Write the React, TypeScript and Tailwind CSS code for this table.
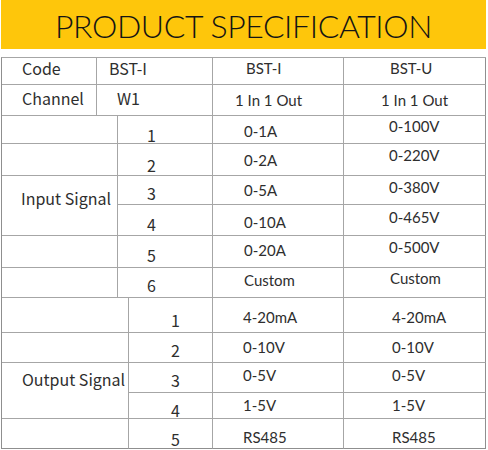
const cjk = "font-['Noto_Sans_CJK_SC',sans-serif] text-[16px] leading-[16px]";
const lat = "font-['Lato',sans-serif] text-[15px] leading-[20px]";

function Cell({ className = '', children }: { className?: string; children?: React.ReactNode }) {
  return <div className={`border-r border-b border-[#a6a6a6] whitespace-nowrap ${className}`}>{children}</div>;
}

export default function App() {
  return (
    <div className="w-[488px] h-[450px] bg-white text-[#2e2e2e]">
      <div className="ml-[1px] w-[485px] h-[49px] bg-[#fec60b] flex justify-center pt-[8px]">
        <h1 className="font-['Lato',sans-serif] font-light text-[32px] leading-[36px] tracking-[-0.4px] text-[#141414]">PRODUCT SPECIFICATION</h1>
      </div>

      <div className="ml-[1px] mt-[8px] w-[485px] border-l border-l-[#8f8f8f] border-t border-t-[#a6a6a6]">
        {/* code / channel */}
        <div className="grid grid-cols-[95px_116px_131px_142px] grid-rows-[27px_31px]">
          <Cell className={`${cjk} pl-[20px] pt-[2px]`}>Code</Cell>
          <Cell className={`${cjk} pl-[12px] pt-[2px]`}>BST-I</Cell>
          <Cell className={`${lat} pl-[33px] pt-[0px]`}>BST-I</Cell>
          <Cell className={`${lat} pl-[46px] pt-[0px] border-r-[#8f8f8f]`}>BST-U</Cell>

          <Cell className={`${cjk} pl-[20px] pt-[5px]`}>Channel</Cell>
          <Cell className={`${cjk} pl-[20px] pt-[5px]`}>W1</Cell>
          <Cell className={`${lat} pl-[22px] pt-[5px]`}>1 In 1 Out</Cell>
          <Cell className={`${lat} pl-[37px] pt-[5px] border-r-[#8f8f8f]`}>1 In 1 Out</Cell>
        </div>

        {/* input signal */}
        <div className="grid grid-cols-[116px_95px_131px_142px] grid-rows-[28px_32px_29px_31px_32px_30px]">
          <Cell />
          <Cell className={`${cjk} pl-[29px] pt-[11px]`}>1</Cell>
          <Cell className={`${lat} pl-[31px] pt-[5px]`}>0-1A</Cell>
          <Cell className={`${lat} pl-[45px] pt-[0px] border-r-[#8f8f8f]`}>0-100V</Cell>

          <Cell />
          <Cell className={`${cjk} pl-[29px] pt-[13px]`}>2</Cell>
          <Cell className={`${lat} pl-[31px] pt-[6px]`}>0-2A</Cell>
          <Cell className={`${lat} pl-[45px] pt-[1px] border-r-[#8f8f8f]`}>0-220V</Cell>

          <Cell className={`${cjk} row-span-2 pl-[19px] pt-[14px]`}>Input Signal</Cell>
          <Cell className={`${cjk} pl-[29px] pt-[9px]`}>3</Cell>
          <Cell className={`${lat} pl-[31px] pt-[4px]`}>0-5A</Cell>
          <Cell className={`${lat} pl-[45px] pt-[1px] border-r-[#8f8f8f]`}>0-380V</Cell>

          <Cell className={`${cjk} pl-[29px] pt-[11px]`}>4</Cell>
          <Cell className={`${lat} pl-[31px] pt-[7px]`}>0-10A</Cell>
          <Cell className={`${lat} pl-[45px] pt-[2px] border-r-[#8f8f8f]`}>0-465V</Cell>

          <Cell />
          <Cell className={`${cjk} pl-[29px] pt-[11px]`}>5</Cell>
          <Cell className={`${lat} pl-[31px] pt-[4px]`}>0-20A</Cell>
          <Cell className={`${lat} pl-[45px] pt-[1px] border-r-[#8f8f8f]`}>0-500V</Cell>

          <Cell />
          <Cell className={`${cjk} pl-[29px] pt-[9px]`}>6</Cell>
          <Cell className={`${lat} pl-[31px] pt-[2px]`}>Custom</Cell>
          <Cell className={`${lat} pl-[46px] pt-[0px] border-r-[#8f8f8f]`}>Custom</Cell>
        </div>

        {/* output signal */}
        <div className="grid grid-cols-[127px_84px_131px_142px] grid-rows-[35px_30px_30px_26px_30px]">
          <Cell />
          <Cell className={`${cjk} pl-[42px] pt-[14px]`}>1</Cell>
          <Cell className={`${lat} pl-[30px] pt-[9px]`}>4-20mA</Cell>
          <Cell className={`${lat} pl-[48px] pt-[9px] border-r-[#8f8f8f]`}>4-20mA</Cell>

          <Cell />
          <Cell className={`${cjk} pl-[42px] pt-[9px]`}>2</Cell>
          <Cell className={`${lat} pl-[30px] pt-[4px]`}>0-10V</Cell>
          <Cell className={`${lat} pl-[48px] pt-[4px] border-r-[#8f8f8f]`}>0-10V</Cell>

          <Cell className={`${cjk} row-span-2 pl-[20px] pt-[8px]`}>Output Signal</Cell>
          <Cell className={`${cjk} pl-[42px] pt-[9px]`}>3</Cell>
          <Cell className={`${lat} pl-[30px] pt-[2px]`}>0-5V</Cell>
          <Cell className={`${lat} pl-[48px] pt-[2px] border-r-[#8f8f8f]`}>0-5V</Cell>

          <Cell className={`${cjk} pl-[42px] pt-[9px]`}>4</Cell>
          <Cell className={`${lat} pl-[30px] pt-[2px]`}>1-5V</Cell>
          <Cell className={`${lat} pl-[48px] pt-[2px] border-r-[#8f8f8f]`}>1-5V</Cell>

          <Cell className="border-b-[#8f8f8f]" />
          <Cell className={`${cjk} pl-[42px] pt-[12px] border-b-[#8f8f8f]`}>5</Cell>
          <Cell className={`${lat} pl-[30px] pt-[8px] border-b-[#8f8f8f]`}>RS485</Cell>
          <Cell className={`${lat} pl-[48px] pt-[8px] border-r-[#8f8f8f] border-b-[#8f8f8f]`}>RS485</Cell>
        </div>
      </div>
    </div>
  );
}
